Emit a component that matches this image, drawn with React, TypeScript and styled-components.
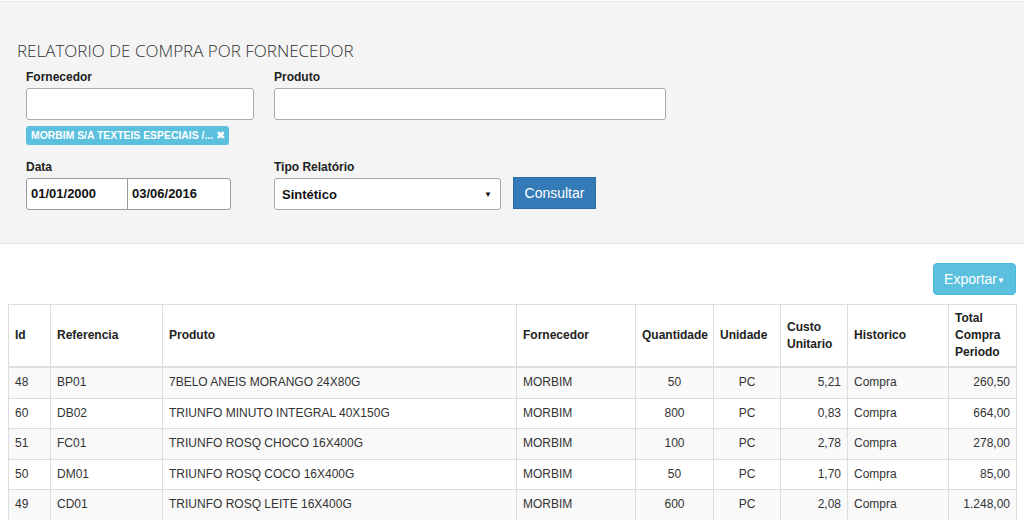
import styled, {createGlobalStyle} from "styled-components";

const GlobalStyle = createGlobalStyle`
    body {
        margin: 0;
        background: #fff;
        font-family: "Liberation Sans", Arial, sans-serif;
        font-size: 12px;
        color: #333;
    }
    * {
        box-sizing: border-box;
    }
`

const FilterPanel = styled.div`
    margin-top: 1px;
    background-color: #f4f4f4;
    border-top: 1px solid #e3e3e3;
    border-bottom: 1px solid #e3e3e3;
    padding: 39px 0 33px 17px;
`

const Title = styled.h3`
    margin: 0 0 8px 0;
    font-family: "Open Sans", sans-serif;
    font-weight: 300;
    font-size: 17px;
    line-height: 20px;
    color: #333;
`

const FieldRow = styled.div<{$gap?: number}>`
    display: flex;
    align-items: flex-start;
    gap: 20px;
    padding-left: 9px;
    margin-bottom: ${p => p.$gap ?? 0}px;
`

const Field = styled.div<{$width: number}>`
    width: ${p => p.$width}px;
    display: flex;
    flex-direction: column;
`

const Label = styled.label`
    font-weight: bold;
    font-size: 12px;
    line-height: 17px;
    margin-bottom: 2px;
    color: #222;
`

const TextInput = styled.div`
    height: 32px;
    background: #fff;
    border: 1px solid #aaa;
    border-radius: 3px;
`

const TagChip = styled.span`
    align-self: flex-start;
    margin-top: 6px;
    height: 19px;
    width: 203px;
    padding: 0 5px;
    background: #5bc0de;
    border-radius: 3px;
    color: #fff;
    font-weight: bold;
    font-size: 10.4px;
    line-height: 19px;
    white-space: nowrap;

    span {
        font-family: "DejaVu Sans", sans-serif;
        font-size: 11px;
        margin-left: 3px;
    }
`

const DateGroup = styled.div`
    display: flex;
`

const DateBox = styled.div<{$first?: boolean}>`
    width: ${p => p.$first ? 102 : 104}px;
    height: 32px;
    background: #fff;
    border: 1px solid #999;
    border-radius: ${p => p.$first ? "3px 0 0 3px" : "0 3px 3px 0"};
    margin-left: ${p => p.$first ? 0 : -1}px;
    padding: 0 4px;
    font-weight: bold;
    font-size: 13px;
    line-height: 30px;
    color: #111;
`

const Inline = styled.div`
    display: flex;
    align-items: flex-start;
    gap: 12px;
`

const SelectBox = styled.div`
    width: 227px;
    height: 32px;
    background: #fff;
    border: 1px solid #aaa;
    border-radius: 3px;
    padding: 0 8px 0 7px;
    display: flex;
    align-items: center;
    justify-content: space-between;
    font-weight: bold;
    font-size: 13px;
    color: #111;

    span {
        font-size: 8px;
    }
`

const PrimaryButton = styled.button`
    width: 83px;
    height: 32px;
    margin-top: -1px;
    background: #337ab7;
    border: 1px solid #2e6da4;
    color: #fff;
    font-family: "Liberation Sans", Arial, sans-serif;
    font-size: 14px;
    padding: 0;
`

const Results = styled.div`
    padding: 19px 8px 0 8px;
`

const ExportBar = styled.div`
    display: flex;
    justify-content: flex-end;
    margin-bottom: 9px;
`

const InfoButton = styled.button`
    width: 83px;
    height: 32px;
    background: #5bc0de;
    border: 1px solid #46b8da;
    border-radius: 4px;
    color: #fff;
    font-family: "Liberation Sans", Arial, sans-serif;
    font-size: 14px;
    padding: 0;

    span {
        font-size: 8px;
        vertical-align: 1px;
    }
`

const Table = styled.table`
    width: 1008px;
    table-layout: fixed;
    border-collapse: collapse;
    border: 1px solid #ddd;

    th, td {
        border: 1px solid #ddd;
        padding: 6px;
        line-height: 17.6px;
        font-size: 12px;
        overflow: hidden;
        white-space: nowrap;
    }

    th {
        font-weight: bold;
        text-align: left;
        white-space: normal;
        border-bottom-width: 2px;
        padding: 5px 6px;
        line-height: 17px;
        color: #222;
    }

    tbody tr:nth-child(odd) {
        background: #f9f9f9;
    }
`

const Cell = styled.td<{$align?: "left" | "center" | "right"}>`
    text-align: ${p => p.$align ?? "left"};
`

const columns = [42, 112, 354, 119, 78, 67, 67, 101, 68]

const rows = [
    ["48", "BP01", "7BELO ANEIS MORANGO 24X80G", "MORBIM", "50", "PC", "5,21", "Compra", "260,50"],
    ["60", "DB02", "TRIUNFO MINUTO INTEGRAL 40X150G", "MORBIM", "800", "PC", "0,83", "Compra", "664,00"],
    ["51", "FC01", "TRIUNFO ROSQ CHOCO 16X400G", "MORBIM", "100", "PC", "2,78", "Compra", "278,00"],
    ["50", "DM01", "TRIUNFO ROSQ COCO 16X400G", "MORBIM", "50", "PC", "1,70", "Compra", "85,00"],
    ["49", "CD01", "TRIUNFO ROSQ LEITE 16X400G", "MORBIM", "600", "PC", "2,08", "Compra", "1.248,00"],
]

const aligns: ("left" | "center" | "right")[] = ["left", "left", "left", "left", "center", "center", "right", "left", "right"]

export default function App() {
    return (
        <>
            <GlobalStyle/>
            <FilterPanel>
                <Title>RELATORIO DE COMPRA POR FORNECEDOR</Title>
                <FieldRow $gap={14}>
                    <Field $width={228}>
                        <Label>Fornecedor</Label>
                        <TextInput/>
                        <TagChip>MORBIM S/A TEXTEIS ESPECIAIS /...<span>✖</span></TagChip>
                    </Field>
                    <Field $width={392}>
                        <Label>Produto</Label>
                        <TextInput/>
                    </Field>
                </FieldRow>
                <FieldRow>
                    <Field $width={228}>
                        <Label>Data</Label>
                        <DateGroup>
                            <DateBox $first>01/01/2000</DateBox>
                            <DateBox>03/06/2016</DateBox>
                        </DateGroup>
                    </Field>
                    <Field $width={392}>
                        <Label>Tipo Relatório</Label>
                        <Inline>
                            <SelectBox>Sintético<span>▼</span></SelectBox>
                            <PrimaryButton type="button">Consultar</PrimaryButton>
                        </Inline>
                    </Field>
                </FieldRow>
            </FilterPanel>
            <Results>
                <ExportBar>
                    <InfoButton type="button">Exportar<span>▼</span></InfoButton>
                </ExportBar>
                <Table>
                    <colgroup>
                        {columns.map((w, i) => <col key={i} style={{width: w}}/>)}
                    </colgroup>
                    <thead>
                        <tr>
                            <th>Id</th>
                            <th>Referencia</th>
                            <th>Produto</th>
                            <th>Fornecedor</th>
                            <th>Quantidade</th>
                            <th>Unidade</th>
                            <th>Custo Unitario</th>
                            <th>Historico</th>
                            <th>Total Compra Periodo</th>
                        </tr>
                    </thead>
                    <tbody>
                        {rows.map(r => (
                            <tr key={r[0]}>
                                {r.map((v, i) => <Cell key={i} $align={aligns[i]}>{v}</Cell>)}
                            </tr>
                        ))}
                    </tbody>
                </Table>
            </Results>
        </>
    )
}
